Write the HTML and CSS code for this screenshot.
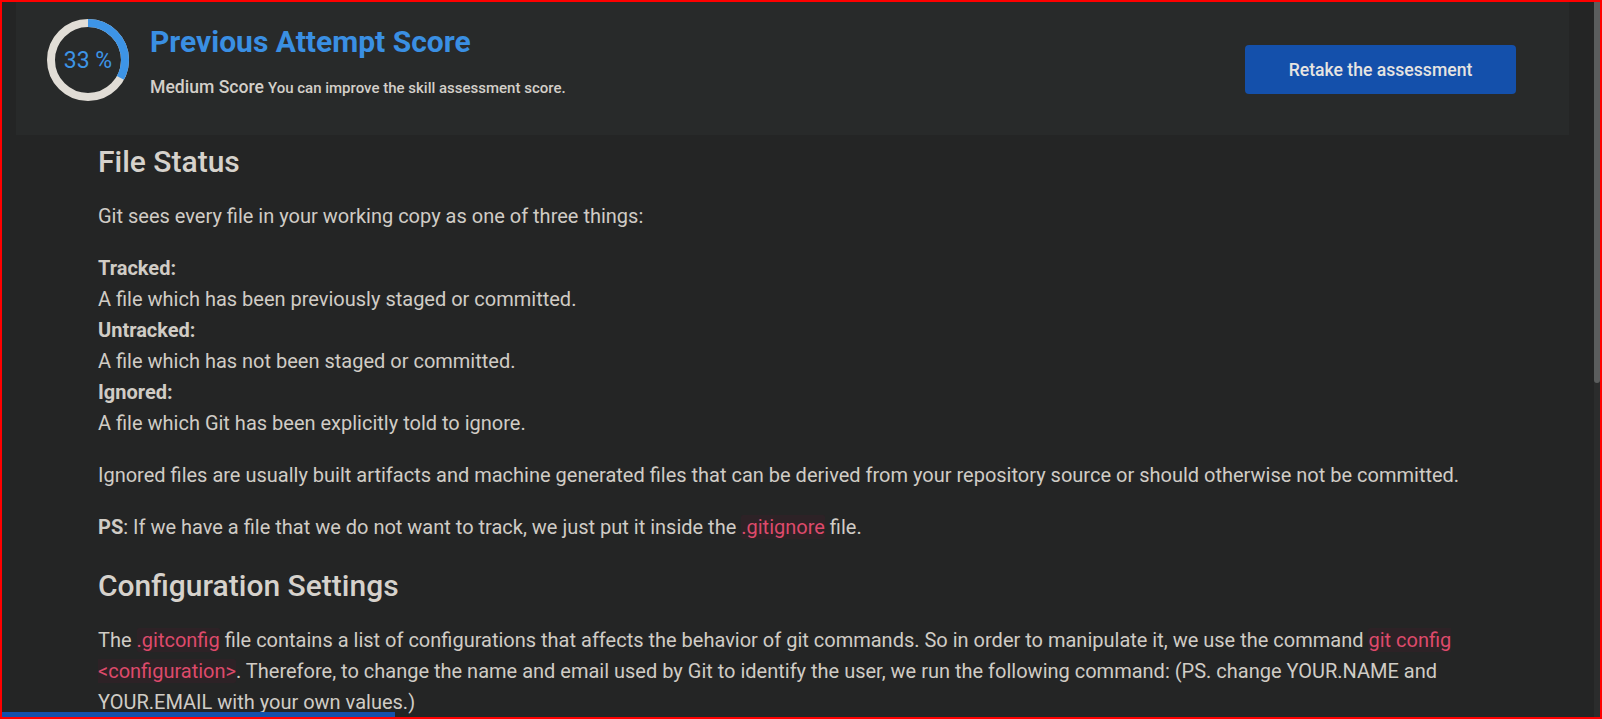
FILE: index.html
```html
<!DOCTYPE html>
<html>
<head>
<meta charset="utf-8">
<link rel="stylesheet" href="styles.css">
</head>
<body>
<div class="frame">
  <div class="main">
    <div class="score-card">
      <div class="ring">
        <svg width="82" height="82" viewBox="0 0 82 82">
          <circle cx="41" cy="41" r="37" fill="none" stroke="#e1ddd6" stroke-width="8"/>
          <circle cx="41" cy="41" r="37" fill="none" stroke="#3d94e6" stroke-width="8" stroke-dasharray="76.7 232.5" transform="rotate(-90 41 41)"/>
        </svg>
        <span class="ring-label">33 %</span>
      </div>
      <div class="score-text">
        <h1 class="score-title">Previous Attempt Score</h1>
        <p class="score-sub"><span class="score-level">Medium Score</span> <span class="score-hint">You can improve the skill assessment score.</span></p>
      </div>
      <button class="retake">Retake the assessment</button>
    </div>
    <div class="content">
      <h2 class="heading first">File Status</h2>
      <p class="para">Git sees every file in your working copy as one of three things:</p>
      <p class="para"><strong>Tracked:</strong><br>A file which has been previously staged or committed.<br><strong>Untracked:</strong><br>A file which has not been staged or committed.<br><strong>Ignored:</strong><br>A file which Git has been explicitly told to ignore.</p>
      <p class="para">Ignored files are usually built artifacts and machine generated files that can be derived from your repository source or should otherwise not be committed.</p>
      <p class="para"><strong>PS</strong>: If we have a file that we do not want to track, we just put it inside the <code class="code">.gitignore</code> file.</p>
      <h2 class="heading">Configuration Settings</h2>
      <p class="para">The <code class="code">.gitconfig</code> file contains a list of configurations that affects the behavior of git commands. So in order to manipulate it, we use the command <code class="code">git config &lt;configuration&gt;</code>. Therefore, to change the name and email used by Git to identify the user, we run the following command: (PS. change YOUR.NAME and YOUR.EMAIL with your own values.)</p>
    </div>
    <div class="progress"></div>
  </div>
  <div class="scrollbar"><div class="thumb"></div></div>
</div>
</body>
</html>
```

FILE: styles.css
```css
html, body {
  margin: 0;
  padding: 0;
  background: #242525;
}
body {
  font-family: Roboto, "Liberation Sans", sans-serif;
  color: #d2cec8;
}
.frame {
  width: 1602px;
  height: 719px;
  box-sizing: border-box;
  border: 2px solid #ff0000;
  display: flex;
  overflow: hidden;
}
.main {
  flex: 1;
  position: relative;
  overflow: hidden;
  background: #242525;
}
.scrollbar {
  width: 6px;
  background: #2b2c2c;
}
.thumb {
  height: 381px;
  background: #5b5d5d;
  border-radius: 0 0 3px 3px;
}
.score-card {
  margin: 0 25px 0 14px;
  height: 133px;
  box-sizing: border-box;
  background: #282a2a;
  display: flex;
  align-items: flex-start;
  padding: 17px 53px 0 31px;
}
.ring {
  position: relative;
  width: 82px;
  height: 82px;
  flex: none;
}
.ring svg {
  display: block;
}
.ring-label {
  position: absolute;
  left: 0;
  right: 0;
  top: 0;
  bottom: 0;
  display: flex;
  align-items: center;
  justify-content: center;
  color: #3d94e6;
  font-size: 23px;
}
.score-text {
  margin-left: 21px;
  padding-top: 5px;
}
.score-title {
  margin: 0;
  font-size: 30px;
  line-height: 36px;
  font-weight: 700;
  color: #3a8fe3;
}
.score-sub {
  margin: 16px 0 0;
  line-height: 22px;
}
.score-level {
  font-size: 17.6px;
  font-weight: 500;
  color: #d3cfc9;
}
.score-hint {
  font-size: 15px;
  font-weight: 500;
  color: #d3cfc9;
}
.retake {
  margin-left: auto;
  margin-top: 26px;
  width: 271px;
  height: 49px;
  border: none;
  border-radius: 4px;
  background: #1450ab;
  color: #e6e4e1;
  font-family: Roboto, "Liberation Sans", sans-serif;
  font-size: 17.6px;
  font-weight: 500;
}
.content {
  padding: 0 96px;
}
.heading {
  margin: 25px 0 21px;
  font-size: 30px;
  line-height: 36px;
  font-weight: 500;
  color: #d6d2cc;
}
.heading.first {
  margin-top: 9px;
}
.para {
  margin: 0 0 21px;
  font-size: 20px;
  line-height: 31px;
  color: #d0ccc5;
}
.para strong {
  font-weight: 700;
}
.code {
  font-family: Roboto, "Liberation Sans", sans-serif;
  font-size: 20px;
  color: #de4a6b;
  background: #2d2226;
  border-radius: 2px;
}
.progress {
  position: absolute;
  left: 0;
  bottom: 0;
  width: 393px;
  height: 5px;
  background: #1450ab;
}
```
